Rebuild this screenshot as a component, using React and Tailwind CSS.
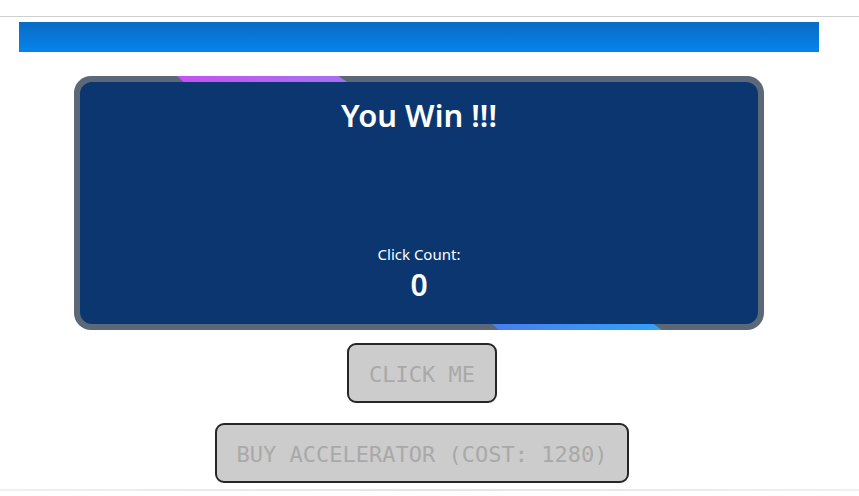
import React from 'react';

export default function App() {
    const clicks = 0;

    return (
        <div className="w-[859px] h-[496px] bg-white overflow-hidden" style={{ fontFamily: '"Noto Sans", "Open Sans", sans-serif' }}>
            <div className="h-[16px]" />
            <div className="h-px bg-[#cfcfcf]" />
            <div className="ml-[19px] w-[800px] pt-[5px]">
                <div className="h-[30px] bg-gradient-to-b from-[#0a6bc3] to-[#0584ec]" />

                <div className="mx-[55px] mt-[24px] relative h-[254px] rounded-[17px] bg-[#5b6877] p-[6px]">
                    {/* glowing border segments */}
                    <div
                        className="absolute top-0 left-[103px] w-[170px] h-[6px] bg-gradient-to-r from-[#c650f2] to-[#a470f0]"
                        style={{ clipPath: 'polygon(0 0, 95% 0, 100% 100%, 4% 100%)' }}
                    />
                    <div
                        className="absolute bottom-0 left-[418px] w-[170px] h-[6px] bg-gradient-to-r from-[#4a7cf0] to-[#2ea2f8]"
                        style={{ clipPath: 'polygon(0 0, 95% 0, 100% 100%, 4% 100%)' }}
                    />
                    <div className="relative h-full rounded-[12px] bg-[#0b3670] text-white flex flex-col items-center">
                        <h1 className="mt-[14px] text-[31px] font-semibold leading-[38px]">You Win !!!</h1>
                        <div className="flex-1" />
                        <p className="mb-[3px] text-[15px] leading-[20px]">Click Count:</p>
                        <p className="mb-[21px] text-[30px] font-semibold leading-[36px]">{clicks}</p>
                    </div>
                </div>

                <div className="flex flex-col items-center pl-[6px] mt-[13px] gap-[20px]" style={{ fontFamily: '"DejaVu Sans Mono", "Liberation Mono", monospace' }}>
                    <button className="h-[60px] w-[150px] pt-[3px] rounded-[9px] border-2 border-[#262626] bg-[#cccccc] text-[#a9a9a9] text-[22px]">
                        CLICK ME
                    </button>
                    <button className="h-[60px] w-[414px] pt-[3px] rounded-[9px] border-2 border-[#262626] bg-[#cccccc] text-[#a9a9a9] text-[22px]">
                        BUY ACCELERATOR (COST: 1280)
                    </button>
                </div>
            </div>
            <div className="mt-[6px] h-[2px] bg-gradient-to-r from-[#f0f0f0] via-[#e4e4e4] to-[#f0f0f0]" />
        </div>
    );
}
